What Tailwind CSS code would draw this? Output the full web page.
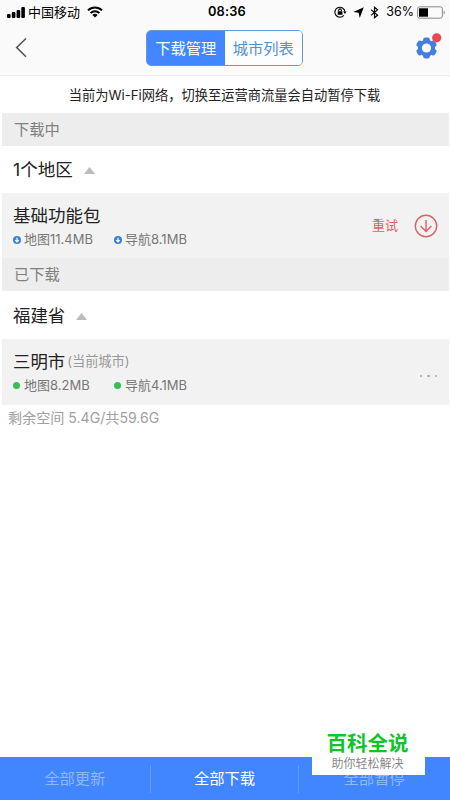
<!DOCTYPE html>
<html lang="zh-CN">
<head>
<meta charset="utf-8">
<title>下载管理</title>
<script src="https://cdn.jsdelivr.net/npm/@tailwindcss/browser@4"></script>
</head>
<body class="bg-white font-['Inter','Noto_Sans_CJK_SC',sans-serif] text-[#222]">
<div class="relative flex h-[800px] w-[450px] flex-col overflow-hidden whitespace-nowrap">
  <header class="flex h-[76px] flex-col border-b border-[#eeeeef] bg-[#fafafa]">
    <div class="grid h-6 grid-cols-[1fr_auto_1fr] items-center pr-[4px] pl-[7px] text-[13px] leading-6 text-black">
      <div class="flex items-center">
        <svg class="h-[11px] w-[18px]" viewBox="0 0 18 11"><rect x="0" y="7" width="3.6" height="4" rx="1"/><rect x="4.8" y="5" width="3.6" height="6" rx="1"/><rect x="9.6" y="3" width="3.6" height="8" rx="1"/><rect x="14.3" y="0" width="3.6" height="11" rx="1"/></svg>
        <span class="ml-[3px]">中国移动</span>
        <svg class="ml-[7px] h-[12px] w-[16px]" viewBox="0 0 16 12" fill="none" stroke="#000" stroke-width="2"><path d="M1 4.4a10 10 0 0 1 14 0M3.6 7.1a6.2 6.2 0 0 1 8.8 0"/><path d="M8 11.6 5.4 9a3.7 3.7 0 0 1 5.2 0Z" fill="#000" stroke="none"/></svg>
      </div>
      <span class="pl-px text-[12.8px] font-semibold tracking-[0.2px]">08:36</span>
      <div class="flex items-center justify-end">
        <svg class="h-[12px] w-[13px]" viewBox="0 0 13 12" fill="none" stroke="#000" stroke-width="1.1"><path d="M9.8 9.4a5 5 0 1 1 1.1-3.6"/><path d="m9.1 5.6 1.8 2.3 1.7-2.3Z" fill="#000" stroke="none"/><rect x="3.7" y="5.3" width="4.7" height="3.5" fill="#000" stroke="none"/><path d="M4.7 5.3V4.2a1.35 1.35 0 0 1 2.7 0v1.1"/></svg>
        <svg class="ml-[6px] h-[11px] w-[11px]" viewBox="0 0 11 11"><path d="M10.8.2 6.7 10.9 5.6 5.8.3 5Z"/></svg>
        <svg class="ml-[6px] h-[13px] w-[9px]" viewBox="0 0 9 13" fill="none" stroke="#000" stroke-width="1.2"><path d="m1 3.6 6.6 5.6-3.1 2.6V1.2l3.1 2.6L1 9.4"/></svg>
        <span class="ml-[7px] text-[12.5px]">36%</span>
        <svg class="ml-[3px] h-[13px] w-[29px]" viewBox="0 0 29 13"><rect x=".6" y=".8" width="24.8" height="11.4" rx="2" fill="none" stroke="#888"/><rect x="2" y="2.3" width="9" height="8.4"/><path d="M26.6 4.5a2.2 2.2 0 0 1 0 4Z" fill="#999"/></svg>
      </div>
    </div>
    <div class="grid h-[51px] grid-cols-[1fr_157px_1fr] items-start pt-[6px] pr-px">
      <svg class="mt-[7px] ml-[15px] h-[21px] w-[13px]" viewBox="0 0 13 21" fill="none" stroke="#555" stroke-width="1.6"><path d="M11 1.5 1.7 10.5 11 19.7"/></svg>
      <div class="grid h-[36px] grid-cols-2 overflow-hidden rounded-[5px] border border-[#6699dc] text-center text-[15.3px] leading-[35px]">
        <span class="bg-[#4287ff] text-white">下载管理</span>
        <span class="bg-[#fcfdff] text-[#5590cf]">城市列表</span>
      </div>
      <div class="mt-[3px] mr-[7px] h-[27px] w-[27px] justify-self-end">
        <svg class="h-[27px] w-[27px]" viewBox="0 0 27 27"><g fill="#427fe0"><circle cx="11.5" cy="15" r="8.6"/><rect x="8.2" y="4.4" width="6.6" height="21.2" rx="2"/><rect x="8.2" y="4.4" width="6.6" height="21.2" rx="2" transform="rotate(60 11.5 15)"/><rect x="8.2" y="4.4" width="6.6" height="21.2" rx="2" transform="rotate(120 11.5 15)"/></g><circle cx="11.5" cy="15" r="4.6" fill="#fafafa"/><circle cx="21.7" cy="4.8" r="4.6" fill="#ee4951"/></svg>
      </div>
    </div>
  </header>

  <main class="flex flex-1 flex-col pr-px pl-[2px]">
    <p class="h-[37px] pr-[2px] text-center text-[13.25px] leading-[38px]">当前为Wi-Fi网络，切换至运营商流量会自动暂停下载</p>
    <h2 class="h-[33px] bg-[#ededed] pl-[12px] text-[15.3px] leading-[34px] text-[#808080]">下载中</h2>
    <div class="flex h-[47px] items-center gap-[11px] pt-[2px] pl-[11px] text-[17.6px]">
      <span>1个地区</span>
      <svg class="h-[7px] w-[11px]" viewBox="0 0 11 7" fill="#bbb"><path d="M5.5 0 11 7H0Z"/></svg>
    </div>
    <section class="flex h-[65px] items-center justify-between bg-[#f2f2f2] pr-[11px] pl-[11px]">
      <div class="pt-[4px]">
        <h3 class="text-[17.5px] leading-[25px]">基础功能包</h3>
        <div class="flex h-[24px] items-center text-[13px] text-[#777]">
          <span class="flex w-[101px] items-center gap-[3px]"><svg class="h-[8px] w-[8px]" viewBox="0 0 8 8"><circle cx="4" cy="4" r="4" fill="#3d7fda"/><path d="M4 1.8v4M2.3 4.2 4 5.9l1.7-1.7" fill="none" stroke="#fff" stroke-width="1.2"/></svg>地图11.4MB</span>
          <span class="flex items-center gap-[3px]"><svg class="h-[8px] w-[8px]" viewBox="0 0 8 8"><circle cx="4" cy="4" r="4" fill="#3d7fda"/><path d="M4 1.8v4M2.3 4.2 4 5.9l1.7-1.7" fill="none" stroke="#fff" stroke-width="1.2"/></svg>导航8.1MB</span>
        </div>
      </div>
      <div class="flex items-center gap-[16px] pt-px text-[13px] text-[#dc6264]">
        <span>重试</span>
        <svg class="h-[24px] w-[24px]" viewBox="0 0 24 24" fill="none" stroke="#dc6264" stroke-width="1.4"><circle cx="12" cy="12" r="10.7"/><path d="M12 6v11.5M6.6 12l5.4 5.6 5.4-5.6"/></svg>
      </div>
    </section>
    <h2 class="h-[33px] bg-[#ededed] pl-[12px] text-[15.3px] leading-[34px] text-[#808080]">已下载</h2>
    <div class="flex h-[48px] items-center gap-[11px] pt-[2px] pl-[11px] text-[17.4px]">
      <span>福建省</span>
      <svg class="h-[7px] w-[11px]" viewBox="0 0 11 7" fill="#bbb"><path d="M5.5 0 11 7H0Z"/></svg>
    </div>
    <section class="flex h-[66px] items-center justify-between bg-[#f2f2f2] pr-[12px] pl-[11px]">
      <div class="pt-[2px]">
        <h3 class="flex items-center text-[17.4px] leading-[25px]">三明市<span class="ml-[2px] text-[13.2px] text-[#999]">(当前城市)</span></h3>
        <div class="flex h-[24px] items-center text-[13px] text-[#777]">
          <span class="flex w-[101px] items-center gap-[4px]"><i class="size-[7px] rounded-full bg-[#32c155]"></i>地图8.2MB</span>
          <span class="flex items-center gap-[4px]"><i class="size-[7px] rounded-full bg-[#32c155]"></i>导航4.1MB</span>
        </div>
      </div>
      <div class="mt-[8px] flex gap-[5px]"><i class="size-[2.5px] rounded-full bg-[#aaa]"></i><i class="size-[2.5px] rounded-full bg-[#aaa]"></i><i class="size-[2.5px] rounded-full bg-[#aaa]"></i></div>
    </section>
    <p class="pl-[6px] text-[14.1px] leading-[26px] text-[#a0a0a0]">剩余空间 5.4G/共59.6G</p>
  </main>

  <footer class="grid h-[43px] grid-cols-3 items-center bg-[#4286ff] pr-px text-center text-[15.3px] leading-[43px] text-[#8fb8ff]">
    <span>全部更新</span>
    <span class="h-[28px] border-x border-[#629bff] leading-[28px] text-white">全部下载</span>
    <span>全部暂停</span>
  </footer>

  <aside class="absolute top-[729px] left-[312px] flex h-[46px] w-[113px] flex-col items-center bg-white pr-[2px]">
    <strong class="mt-[2px] text-[20.5px] leading-[25px] font-bold text-[#11c42c]">百科全说</strong>
    <span class="text-[12px] leading-[15px] text-[#888]">助你轻松解决</span>
  </aside>
</div>
</body>
</html>
